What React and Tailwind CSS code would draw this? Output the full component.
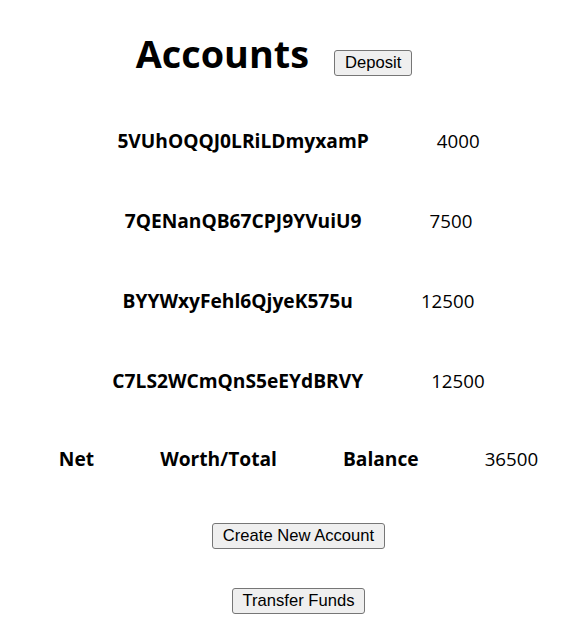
import React from "react";

const accounts = [
  { id: "5VUhOQQJ0LRiLDmyxamP", balance: 4000 },
  { id: "7QENanQB67CPJ9YVuiU9", balance: 7500 },
  { id: "BYYWxyFehl6QjyeK575u", balance: 12500 },
  { id: "C7LS2WCmQnS5eEYdBRVY", balance: 12500 },
];

const btn =
  "bg-[#efefef] border border-[#767676] rounded-[3px] px-[10px] py-[3px] text-[16.6px] leading-[18px] text-black font-['Liberation_Sans',Arial,sans-serif]";

export default function App() {
  const total = accounts.reduce((sum, a) => sum + a.balance, 0);

  return (
    <div className="w-[582px] min-h-[644px] bg-white text-black font-['Open_Sans',sans-serif]">
      {/* Header */}
      <div className="h-[101px] pt-[34px] flex justify-center items-baseline gap-[25px] pr-[34px]">
        <h1 className="text-[37.8px] leading-[40px] font-bold">Accounts</h1>
        <button className={btn}>Deposit</button>
      </div>

      {/* Account list */}
      {accounts.map((a) => (
        <div key={a.id} className="h-[80px] flex items-center justify-center gap-[68px] pl-[15px]">
          <h3 className="text-[19.2px] font-bold">{a.id}</h3>
          <span className="text-[18.72px]">{a.balance}</span>
        </div>
      ))}

      {/* Total */}
      <div className="h-[76px] flex items-center justify-center gap-[66px] pl-[15px]">
        <h3 className="text-[19.2px] font-bold">Net</h3>
        <h3 className="text-[19.2px] font-bold">Worth/Total</h3>
        <h3 className="text-[19.2px] font-bold">Balance</h3>
        <span className="text-[18.72px]">{total}</span>
      </div>

      <div className="flex flex-col items-center pl-[15px]">
        <button className={`${btn} mt-[26px]`}>Create New Account</button>
        <button className={`${btn} mt-[39px]`}>Transfer Funds</button>
      </div>
    </div>
  );
}
